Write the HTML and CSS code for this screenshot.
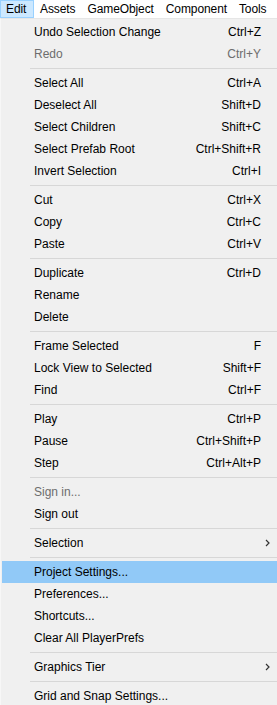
FILE: index.html
```html
<!DOCTYPE html>
<html lang="en">
  <head>
    <meta charset="UTF-8" />
    <meta name="viewport" content="width=device-width, initial-scale=1.0" />
    <title>Edit menu</title>
    <link rel="stylesheet" href="styles.css">
  </head>
  <body>
    <div class="menubar">
      <div class="bar_item active">Edit</div>
      <div class="bar_item">Assets</div>
      <div class="bar_item">GameObject</div>
      <div class="bar_item">Component</div>
      <div class="bar_item">Tools</div>
    </div>

    <div class="menu">
      <div class="item"><span>Undo Selection Change</span><span class="key">Ctrl+Z</span></div>
      <div class="item disabled"><span>Redo</span><span class="key">Ctrl+Y</span></div>
      <div class="sep"></div>

      <div class="item"><span>Select All</span><span class="key">Ctrl+A</span></div>
      <div class="item"><span>Deselect All</span><span class="key">Shift+D</span></div>
      <div class="item"><span>Select Children</span><span class="key">Shift+C</span></div>
      <div class="item"><span>Select Prefab Root</span><span class="key">Ctrl+Shift+R</span></div>
      <div class="item"><span>Invert Selection</span><span class="key">Ctrl+I</span></div>
      <div class="sep"></div>

      <div class="item"><span>Cut</span><span class="key">Ctrl+X</span></div>
      <div class="item"><span>Copy</span><span class="key">Ctrl+C</span></div>
      <div class="item"><span>Paste</span><span class="key">Ctrl+V</span></div>
      <div class="sep"></div>

      <div class="item"><span>Duplicate</span><span class="key">Ctrl+D</span></div>
      <div class="item"><span>Rename</span></div>
      <div class="item"><span>Delete</span></div>
      <div class="sep"></div>

      <div class="item"><span>Frame Selected</span><span class="key">F</span></div>
      <div class="item"><span>Lock View to Selected</span><span class="key">Shift+F</span></div>
      <div class="item"><span>Find</span><span class="key">Ctrl+F</span></div>
      <div class="sep"></div>

      <div class="item"><span>Play</span><span class="key">Ctrl+P</span></div>
      <div class="item"><span>Pause</span><span class="key">Ctrl+Shift+P</span></div>
      <div class="item"><span>Step</span><span class="key">Ctrl+Alt+P</span></div>
      <div class="sep"></div>

      <div class="item disabled"><span>Sign in...</span></div>
      <div class="item"><span>Sign out</span></div>
      <div class="sep"></div>

      <div class="item sub"><span>Selection</span>
        <svg class="arrow" width="5" height="8" viewBox="0 0 5 8"><path d="M1 1 L4 4 L1 7" fill="none" stroke="#333" stroke-width="1.2"/></svg>
      </div>
      <div class="sep"></div>

      <div class="item hover"><span>Project Settings...</span></div>
      <div class="item"><span>Preferences...</span></div>
      <div class="item"><span>Shortcuts...</span></div>
      <div class="item"><span>Clear All PlayerPrefs</span></div>
      <div class="sep"></div>

      <div class="item sub"><span>Graphics Tier</span>
        <svg class="arrow" width="5" height="8" viewBox="0 0 5 8"><path d="M1 1 L4 4 L1 7" fill="none" stroke="#333" stroke-width="1.2"/></svg>
      </div>
      <div class="sep"></div>

      <div class="item"><span>Grid and Snap Settings...</span></div>
    </div>
  </body>
</html>
```

FILE: styles.css
```css
* {
    margin: 0;
    padding: 0;
    box-sizing: border-box;
}

body {
    width: 277px;
    height: 705px;
    overflow: hidden;
    background: #f0f0f0;
    font-family: "Liberation Sans", Arial, sans-serif;
    font-size: 12px;
    color: #000;
}

.menubar {
    display: flex;
    height: 18px;
    background: #fff;
    white-space: nowrap;
}

.menubar .bar_item {
    height: 18px;
    line-height: 16px;
    padding: 0 5px;
    border: 1px solid transparent;
    letter-spacing: -0.1px;
}

.menubar .bar_item.active {
    width: 34px;
    background: #cce8ff;
    border-color: #99d1ff;
}

.menu {
    background: #f0f0f0;
    border-top: 1px solid #e6e6e6;
    border-left: 1px solid #f7f7f7;
    padding: 2px 0 0 1px;
}

.menu .item {
    display: flex;
    align-items: center;
    justify-content: space-between;
    height: 22px;
    padding: 0 16px 0 32px;
}

.menu .item.disabled {
    color: #6d6d6d;
}

.menu .item.hover {
    background: #91c9f7;
}

.menu .item.sub {
    padding-right: 7px;
}

.menu .sep {
    height: 7px;
    margin-left: 28px;
    padding-top: 3px;
}

.menu .sep::after {
    content: "";
    display: block;
    height: 1px;
    background: #d7d7d7;
}
```
